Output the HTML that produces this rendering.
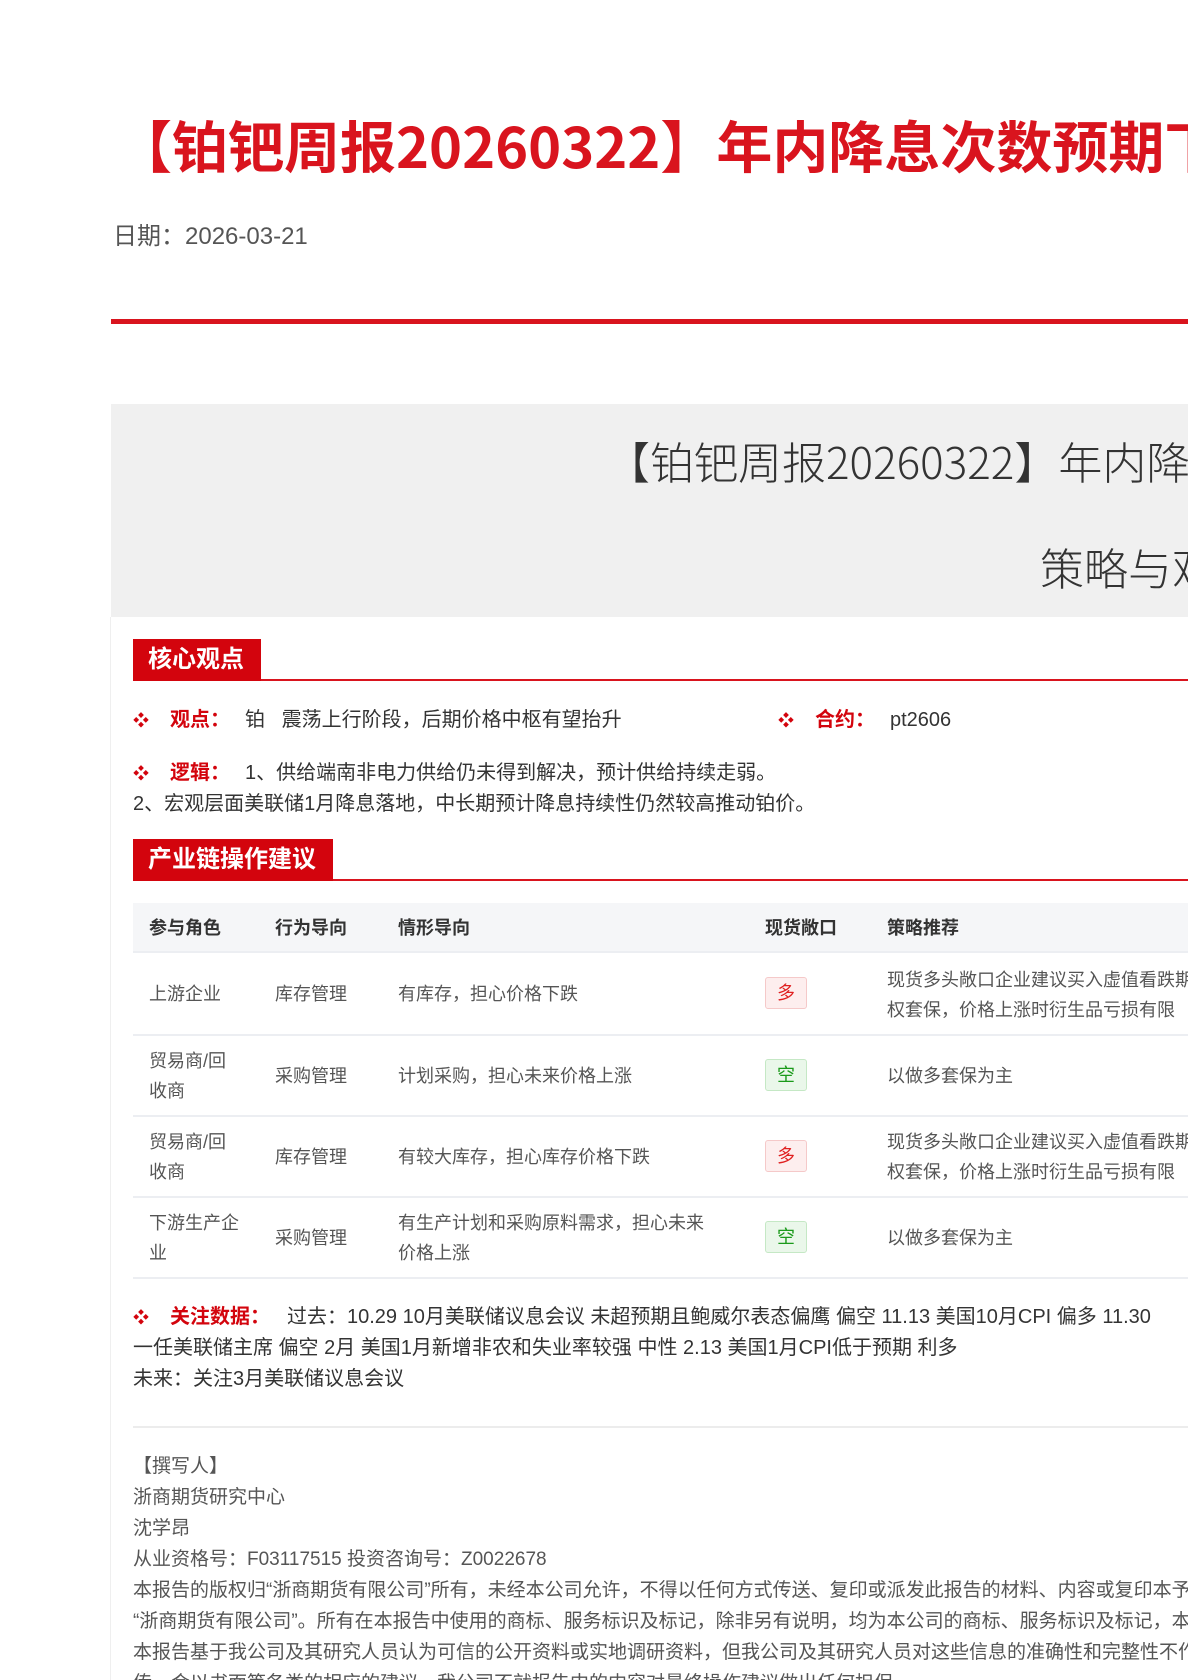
<!DOCTYPE html>
<html><head><meta charset="utf-8"><style>
*{margin:0;padding:0;box-sizing:border-box}
html,body{width:1188px;height:1680px;overflow:hidden;background:#fff}
body{font-family:"Liberation Sans","Noto Sans CJK SC",sans-serif;color:#333}
#w{position:relative;width:1188px;height:1680px;overflow:hidden}
.a{position:absolute;white-space:nowrap}
.title{left:116px;top:110px;font-size:56px;font-weight:bold;color:#d9141e;line-height:70px;font-family:"Noto Sans CJK SC",sans-serif}
.date{left:113px;top:222px;font-size:24px;color:#555;line-height:30px}
.redline{left:111px;top:319px;width:1077px;height:5px;background:#d9141e}
.grey{left:111px;top:404px;width:1077px;height:213px;background:#f0f0f0}
.gt{font-size:44px;color:#333;line-height:54px;font-family:"Noto Sans CJK SC",sans-serif;font-weight:300}
.border{left:110px;top:617px;width:1px;height:1063px;background:#efefef}
.sec{height:42px;background:#d3040d;color:#fff;font-size:24px;font-weight:bold;line-height:42px;padding-left:15px}
.secline{height:2px;background:#d9141e;width:1000px}
.bul{font-size:16px;color:#d3040d;font-weight:bold}
.lab{font-size:20px;color:#d3040d;font-weight:bold;line-height:26px}
.tx{font-size:20px;color:#333;line-height:26px}
.th{left:133px;top:903px;width:1055px;height:50px;background:#f5f6f8;border-bottom:2px solid #eceef2}
.c{font-size:18px;color:#555;line-height:29px}
.h{font-size:18px;color:#333;font-weight:bold;line-height:29px}
.rl{left:133px;width:1055px;height:2px;background:#eceef2}
.tag{width:42px;height:32px;border-radius:3px;font-size:18px;text-align:center;line-height:30px}
.duo{background:#fdeeee;border:1px solid #f5c9c9;color:#e02020}
.kong{background:#eaf7ea;border:1px solid #c5e8c5;color:#1a9a1a}
.f{font-size:19px;color:#555;line-height:31px;left:133px}
</style></head><body><div id="w">
<div class="a title">【铂钯周报20260322】年内降息次数预期下修</div>
<div class="a date">日期：2026-03-21</div>
<div class="a redline"></div>
<div class="a grey"></div>
<div class="a gt" style="left:606px;top:433px">【铂钯周报20260322】年内降息</div>
<div class="a gt" style="left:1040px;top:539px">策略与观</div>
<div class="a border"></div>

<div class="a sec" style="left:133px;top:639px;width:128px">核心观点</div>
<div class="a secline" style="left:261px;top:679px;width:927px"></div>

<div class="a bul" style="left:133px;top:707px">❖</div>
<div class="a lab" style="left:170px;top:707px">观点：</div>
<div class="a tx" style="left:245px;top:707px">铂&nbsp;&nbsp;&nbsp;震荡上行阶段，后期价格中枢有望抬升</div>
<div class="a bul" style="left:778px;top:707px">❖</div>
<div class="a lab" style="left:815px;top:707px">合约：</div>
<div class="a tx" style="left:890px;top:707px">pt2606</div>

<div class="a bul" style="left:133px;top:760px">❖</div>
<div class="a lab" style="left:170px;top:760px">逻辑：</div>
<div class="a tx" style="left:245px;top:760px">1、供给端南非电力供给仍未得到解决，预计供给持续走弱。</div>
<div class="a tx" style="left:133px;top:791px">2、宏观层面美联储1月降息落地，中长期预计降息持续性仍然较高推动铂价。</div>

<div class="a sec" style="left:133px;top:839px;width:200px">产业链操作建议</div>
<div class="a secline" style="left:333px;top:879px;width:855px"></div>

<div class="a th"></div>
<div class="a h" style="left:149px;top:914px">参与角色</div>
<div class="a h" style="left:275px;top:914px">行为导向</div>
<div class="a h" style="left:398px;top:914px">情形导向</div>
<div class="a h" style="left:765px;top:914px">现货敞口</div>
<div class="a h" style="left:887px;top:914px">策略推荐</div>

<div class="a c" style="left:149px;top:980px">上游企业</div>
<div class="a c" style="left:275px;top:980px">库存管理</div>
<div class="a c" style="left:398px;top:980px">有库存，担心价格下跌</div>
<div class="a tag duo" style="left:765px;top:977px">多</div>
<div class="a c" style="left:887px;top:966px">现货多头敞口企业建议买入虚值看跌期</div>
<div class="a c" style="left:887px;top:996px">权套保，价格上涨时衍生品亏损有限</div>
<div class="a rl" style="top:1034px"></div>

<div class="a c" style="left:149px;top:1047px">贸易商/回</div>
<div class="a c" style="left:149px;top:1077px">收商</div>
<div class="a c" style="left:275px;top:1062px">采购管理</div>
<div class="a c" style="left:398px;top:1062px">计划采购，担心未来价格上涨</div>
<div class="a tag kong" style="left:765px;top:1059px">空</div>
<div class="a c" style="left:887px;top:1062px">以做多套保为主</div>
<div class="a rl" style="top:1115px"></div>

<div class="a c" style="left:149px;top:1128px">贸易商/回</div>
<div class="a c" style="left:149px;top:1158px">收商</div>
<div class="a c" style="left:275px;top:1143px">库存管理</div>
<div class="a c" style="left:398px;top:1143px">有较大库存，担心库存价格下跌</div>
<div class="a tag duo" style="left:765px;top:1140px">多</div>
<div class="a c" style="left:887px;top:1128px">现货多头敞口企业建议买入虚值看跌期</div>
<div class="a c" style="left:887px;top:1158px">权套保，价格上涨时衍生品亏损有限</div>
<div class="a rl" style="top:1196px"></div>

<div class="a c" style="left:149px;top:1209px">下游生产企</div>
<div class="a c" style="left:149px;top:1239px">业</div>
<div class="a c" style="left:275px;top:1224px">采购管理</div>
<div class="a c" style="left:398px;top:1209px">有生产计划和采购原料需求，担心未来</div>
<div class="a c" style="left:398px;top:1239px">价格上涨</div>
<div class="a tag kong" style="left:765px;top:1221px">空</div>
<div class="a c" style="left:887px;top:1224px">以做多套保为主</div>
<div class="a rl" style="top:1277px"></div>

<div class="a bul" style="left:133px;top:1304px">❖</div>
<div class="a lab" style="left:170px;top:1304px">关注数据：</div>
<div class="a tx" style="left:287px;top:1304px">过去：10.29 10月美联储议息会议 未超预期且鲍威尔表态偏鹰 偏空 11.13 美国10月CPI 偏多 11.30</div>
<div class="a tx" style="left:133px;top:1335px">一任美联储主席 偏空 2月 美国1月新增非农和失业率较强 中性 2.13 美国1月CPI低于预期 利多</div>
<div class="a tx" style="left:133px;top:1366px">未来：关注3月美联储议息会议</div>

<div class="a" style="left:133px;top:1426px;width:1055px;height:2px;background:#ececec"></div>

<div class="a f" style="top:1451px">【撰写人】</div>
<div class="a f" style="top:1482px">浙商期货研究中心</div>
<div class="a f" style="top:1513px">沈学昂</div>
<div class="a f" style="top:1544px">从业资格号：F03117515 投资咨询号：Z0022678</div>
<div class="a f" style="top:1575px">本报告的版权归“浙商期货有限公司”所有，未经本公司允许，不得以任何方式传送、复印或派发此报告的材料、内容或复印本予</div>
<div class="a f" style="top:1606px">“浙商期货有限公司”。所有在本报告中使用的商标、服务标识及标记，除非另有说明，均为本公司的商标、服务标识及标记，本</div>
<div class="a f" style="top:1637px">本报告基于我公司及其研究人员认为可信的公开资料或实地调研资料，但我公司及其研究人员对这些信息的准确性和完整性不作</div>
<div class="a f" style="top:1668px">传，会以书面等各类的相应的建议，我公司不就报告中的内容对最终操作建议做出任何担保。</div>
</div></body></html>
